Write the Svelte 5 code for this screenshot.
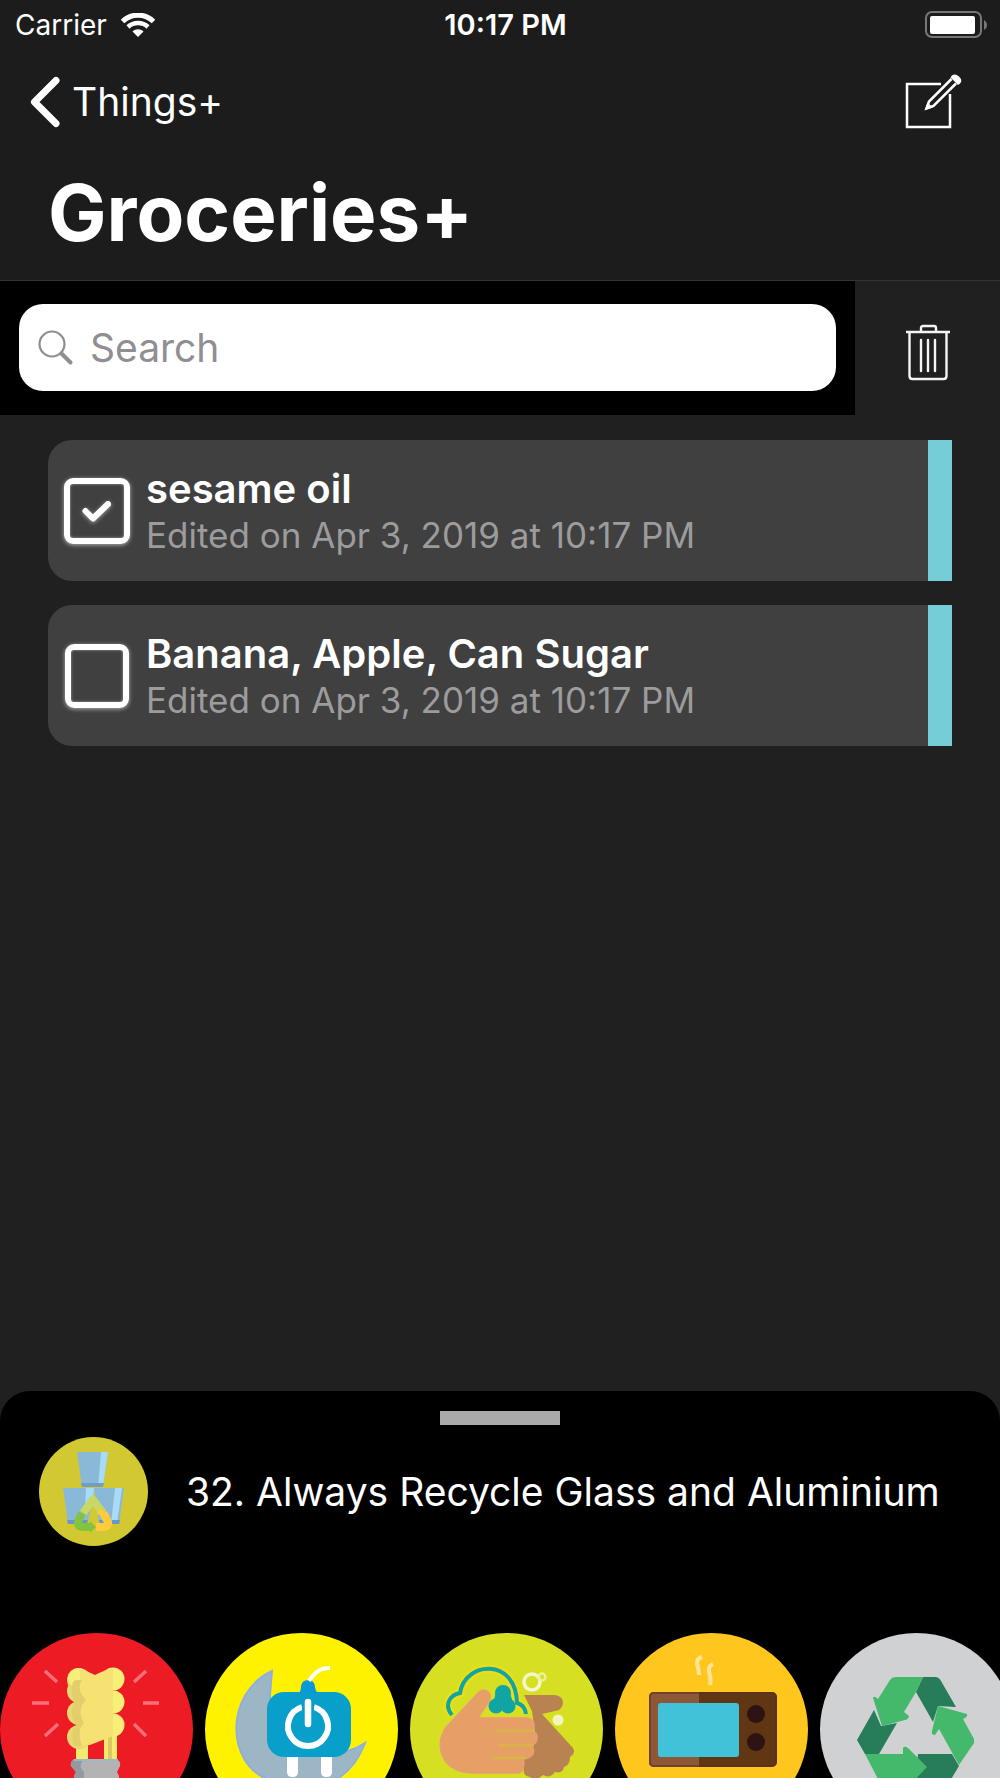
<script>
    let search = $state('');
    let items = $state([
        { title: 'sesame oil', edited: 'Edited on Apr 3, 2019 at 10:17 PM', done: true },
        { title: 'Banana, Apple, Can Sugar', edited: 'Edited on Apr 3, 2019 at 10:17 PM', done: false }
    ]);

    let shown = $derived(
        items.filter((item) => item.title.toLowerCase().includes(search.toLowerCase()))
    );

    const removeDone = () => {
        items = items.filter((item) => !item.done);
    };
</script>

<div class="app">
    <header>
        <div class="status">
            <div class="carrier">
                <span>Carrier</span>
                <svg width="34" height="24" viewBox="0 0 34 24" fill="none" stroke="#fff">
                    <path d="M1.5 8.5C10 0 24 0 32.500 8.500" stroke-width="5" />
                    <path d="M7 14C12.500 8.800 21.500 8.800 27 14" stroke-width="4.500" />
                    <path d="M11.500 18.500C14.500 15.500 19.500 15.500 22.500 18.500L17 24Z" fill="#fff" stroke="none" />
                </svg>
            </div>
            <span class="time">10:17 PM</span>
            <svg class="battery" width="64" height="28" viewBox="0 0 64 28">
                <rect x="2" y="1" width="55" height="25" rx="6" fill="none" stroke="#777" stroke-width="2" />
                <rect x="6" y="5" width="45" height="18" rx="2" fill="#fff" />
                <path d="M60 9C64 11 64 17 60 19Z" fill="#777" />
            </svg>
        </div>

        <nav>
            <a class="back" href="#things">
                <svg width="30" height="52" viewBox="0 0 30 52" fill="none" stroke="#fff" stroke-width="7" stroke-linecap="round" stroke-linejoin="round">
                    <path d="M26 4.500L4.500 26L26 47.500" />
                </svg>
                Things+
            </a>
            <button class="icon" aria-label="New item">
                <svg width="57" height="56" viewBox="0 0 57 56" fill="none" stroke="#fff">
                    <path d="M36 10H2V53H45V20" stroke-width="2.500" />
                    <path d="M46.500 5L24 27.500L21.500 34.500L28.500 32L51 9.500" stroke-width="2.500" />
                    <path d="M20 36L22.500 28.500L28 33.500Z" fill="#fff" stroke="none" />
                    <path d="M47 1.500Q50 -1 54 2.500Q58 6.500 55 9.500L53 11L45.500 3.500Z" fill="#fff" stroke="none" />
                </svg>
            </button>
        </nav>

        <h1>Groceries+</h1>
    </header>

    <div class="toolbar">
        <div class="search-wrap">
            <label class="search">
                <svg width="36" height="36" viewBox="0 0 36 36" fill="none" stroke="#8e8e93">
                    <circle cx="14" cy="14" r="12.500" stroke-width="2.200" />
                    <path d="M23.500 23.500L32.500 32.500" stroke-width="4" stroke-linecap="round" />
                </svg>
                <input type="search" placeholder="Search" aria-label="Search" bind:value={search} />
            </label>
        </div>
        <button class="icon trash" aria-label="Delete checked items" onclick={removeDone}>
            <svg width="44" height="58" viewBox="0 0 44 58" fill="none" stroke="#f4f4f4" stroke-width="2.400">
                <path d="M0 8H44" />
                <path d="M15 8V4Q15 2 17 2H28Q30 2 30 4V8" />
                <path d="M3.500 8V52Q3.500 55 6.500 55H37.500Q40.500 55 40.500 52V8" />
                <path d="M15 16V47M22 16V47M29 16V47" stroke-linecap="round" />
            </svg>
        </button>
    </div>

    <ul class="items">
        {#each shown as item}
            <li>
                <label class="item">
                    <span class="check">
                        <input type="checkbox" bind:checked={item.done} />
                        {#if item.done}
                            <svg width="32" height="24" viewBox="0 0 32 24" fill="none" stroke="#fff" stroke-width="6" stroke-linecap="round" stroke-linejoin="round">
                                <path d="M4.500 12L12 19.500L27 5" />
                            </svg>
                        {/if}
                    </span>
                    <span class="text">
                        <span class="title">{item.title}</span>
                        <span class="edited">{item.edited}</span>
                    </span>
                </label>
            </li>
        {/each}
    </ul>

    <section class="sheet">
        <div class="handle"></div>

        <div class="tip">
            <svg width="109" height="109" viewBox="0 0 109 109">
                <circle cx="54.500" cy="54.500" r="54.500" fill="#d2c832" />
                <!-- stacked glasses -->
                <path d="M38 15H69L64 50H43Z" fill="#8ab8d8" />
                <path d="M62 15H69L64 50H59Z" fill="#a9daf6" />
                <path d="M42 46H65L64 50H43Z" fill="#6f9fc8" />
                <path d="M24 51H55L51 87H29Z" fill="#8ab8d8" />
                <path d="M47 51H55L53 70H46Z" fill="#a9daf6" />
                <path d="M55 51H85L80 87H60Z" fill="#8ab8d8" />
                <path d="M76 51H83L78 87H72Z" fill="#a9daf6" />
                <path d="M28 83H52V87H29ZM58 83H81L80 87H58Z" fill="#6796cd" />
                <!-- recycling loop -->
                <path d="M54 65L47 90H62Z" fill="#d2c832" />
                <g fill="none" stroke-width="8" stroke-linejoin="round">
                    <path d="M44 76L54 63L64 76" stroke="#c8d862" />
                    <path d="M43 76L39 85Q38 90 44 90H52" stroke="#84c341" />
                    <path d="M64 76L69 85Q70 90 64 90H57" stroke="#ffcb3d" />
                </g>
                <path d="M51 84L57 90L51 96Z" fill="#84c341" />
                <path d="M58 77L60 72L69 76L71 82Z" fill="#ffcb3d" />
            </svg>
            <span>32. Always Recycle Glass and Aluminium</span>
        </div>

        <div class="tips">
            <button aria-label="Energy saving bulb">
                <svg width="193" height="193" viewBox="0 0 193 193">
                    <circle cx="96.500" cy="96.500" r="96.500" fill="#ed1c24" />
                    <path d="M45 38L57 49M32 70H49M45 103L58 91M146 38L134 49M143 70H159M146 103L134 91" stroke="#fa6f79" stroke-width="3.500" />
                    <path d="M76 100H88V128H76ZM104 95H117V128H104Z" fill="#f5ea70" />
                    <path d="M108 95H112V128H108Z" fill="#dfc85f" />
                    <g fill="#e7d873">
                        <circle cx="79" cy="47" r="12" />
                        <circle cx="79" cy="58" r="12" />
                        <circle cx="79" cy="80" r="12" />
                        <circle cx="79" cy="104" r="12" />
                    </g>
                    <g fill="#f7ef77">
                        <circle cx="78" cy="45" r="10" />
                        <circle cx="113" cy="46" r="11.500" />
                        <circle cx="113" cy="69" r="11.500" />
                        <circle cx="113" cy="92" r="11.500" />
                    </g>
                    <path d="M76 36Q84 36 95 42Q106 36 113 36V103L90 112L80 114V38Z" fill="#f6e173" />
                    <path d="M73 49Q75 46 82 47Q76 57 86 67Q76 77 84 90Q76 97 82 113H75Q69 102 76 92Q68 80 75 69Q69 58 73 49Z" fill="#e2ce6b" />
                    <path d="M74 126H117Q121 129 120 133L117 139L119 143V170H74V143L76 139L71 133Q70 129 74 126Z" fill="#b3b3b3" />
                    <path d="M74 126H84Q77 133 84 139V170H74V143L76 139L71 133Q70 129 74 126Z" fill="#929aa0" />
                    <path d="M74 127H118" stroke="#98bcc7" stroke-width="2" />
                </svg>
            </button>
            <button aria-label="Unplug at night">
                <svg width="193" height="193" viewBox="0 0 193 193">
                    <circle cx="96.500" cy="96.500" r="96.500" fill="#fff200" />
                    <path d="M67 38C20 60 20 130 64 147C105 168 145 150 160 110C145 120 125 123 100 118L65 100V62Z" fill="#9cb6c5" stroke="#8daee0" stroke-width="2" />
                    <path d="M82 120H93V139Q93 144 87.500 144Q82 144 82 139ZM116 120H127V139Q127 144 121.500 144Q116 144 116 139Z" fill="#fff" />
                    <rect x="62" y="59" width="84" height="65" rx="17" fill="#08a0ca" />
                    <path d="M94 60Q96 58 96 53Q97 47 103 47Q109 47 110 53Q110 58 113 60Z" fill="#0799d8" />
                    <path d="M104 48C110 39 115 35 125 35" fill="none" stroke="#fff" stroke-width="4" />
                    <path d="M97 74A20 20 0 1 0 109 74" fill="none" stroke="#fff" stroke-width="6" />
                    <path d="M103 69V91" stroke="#08a0ca" stroke-width="12" />
                    <path d="M103 69V91" stroke="#fff" stroke-width="6.500" stroke-linecap="round" />
                </svg>
            </button>
            <button aria-label="Wash hands">
                <svg width="193" height="193" viewBox="0 0 193 193">
                    <circle cx="96.500" cy="96.500" r="96.500" fill="#d7df23" />
                    <path d="M42 82C34 73 39 62 50 60C55 28 106 24 107 70Q115 72 116 81" fill="none" stroke="#eadf17" stroke-width="9" />
                    <path d="M42 82C34 73 39 62 50 60C55 28 106 24 107 70Q115 72 116 81" fill="none" stroke="#10a5a2" stroke-width="4" />
                    <g fill="#10a5a2">
                        <circle cx="93" cy="60" r="8" />
                        <circle cx="86" cy="73" r="7.500" />
                        <circle cx="98" cy="73" r="7.500" />
                        <path d="M86 60H100L104 73H82Z" />
                    </g>
                    <path d="M114 62H145Q153 63 153 70Q152 77 145 78L132 81L163 115Q166 120 160 124Q160 132 154 134Q153 141 145 139Q140 146 133 142Q125 149 120 144Q112 143 114 134V126L126 107L122 78Z" fill="#b98251" />
                    <path d="M68 60Q74 54 79 60Q82 64 78 70L68 85H117Q124 86 124 92Q124 96 121 98Q128 100 127 105Q127 111 121 112Q125 115 123 121Q121 125 113 126Q115 130 113 135Q112 140 107 140H62C30 140 22 108 39 91Z" fill="#e6a065" stroke="#ea9b79" stroke-width="1.500" />
                    <path d="M85 98H124M88 112H124M83 125H117" stroke="#d9b548" stroke-width="2.500" />
                    <circle cx="122" cy="49" r="8" fill="none" stroke="#f5f6ce" stroke-width="3.500" />
                    <circle cx="132" cy="44" r="3.500" fill="none" stroke="#edf197" stroke-width="2.500" />
                    <circle cx="148" cy="87" r="5.500" fill="#f3f5bd" />
                </svg>
            </button>
            <button aria-label="Use the microwave">
                <svg width="193" height="193" viewBox="0 0 193 193">
                    <circle cx="96.500" cy="96.500" r="96.500" fill="#ffc61e" />
                    <path d="M87 24C78 27 84 33 84 42M98 31C89 36 98 42 95 52" fill="none" stroke="#ffe595" stroke-width="4" />
                    <rect x="34" y="59" width="128" height="75" rx="5" fill="#603613" />
                    <path d="M84 59H39Q34 59 34 64V129Q34 134 39 134H84Z" fill="#8c5837" />
                    <rect x="35" y="60" width="126" height="73" rx="4" fill="none" stroke="#55292a" stroke-opacity="0.500" stroke-width="2" />
                    <rect x="43" y="70" width="81" height="54" rx="3" fill="#42c2d9" />
                    <circle cx="141" cy="81" r="9" fill="#2d1313" />
                    <circle cx="141" cy="109" r="9" fill="#2d1313" />
                </svg>
            </button>
            <button aria-label="Recycle">
                <svg width="193" height="193" viewBox="0 0 193 193">
                    <circle cx="96.500" cy="96.500" r="96.500" fill="#d0d1d3" />
                    <g fill="#277d59">
                        <path d="M103 44H115Q119 44 121 48L136 74L118 73L113 89L96 59Z" />
                        <path d="M54 77L61 93L77 90L59 121H45L37 107Z" />
                        <path d="M98 121H132L139 133L130 148Q127 152 123 152H95Z" />
                    </g>
                    <g fill="#45b96b">
                        <path d="M76 44H103L96 59L84 79L89 83Q88 87 85 87L62 93L53 65Q54 62 58 66L70 47Q72 44 76 44Z" />
                        <path d="M118 73L147 81Q148 84 143 86L154 106V110L139 132L119 96L115 102Q111 102 112 98Z" />
                        <path d="M45 121H83V115Q85 112 89 116L107 134L89 153L83 152H64Q61 152 59 148Z" />
                    </g>
                </svg>
            </button>
        </div>
    </section>
</div>

<style>
    :global(body) {
        margin: 0;
        background: #202020;
    }
    .app {
        display: flex;
        flex-direction: column;
        height: 100vh;
        overflow: hidden;
        background: #202020;
        color: #fff;
        font-family: Inter, "Liberation Sans", sans-serif;
        font-size: 39px;
        line-height: 46px;
    }
    svg {
        display: block;
        flex: none;
    }
    button {
        padding: 0;
        border: 0;
        background: none;
    }
    header {
        background: #1c1c1c;
        border-bottom: 1px solid #343434;
        padding-bottom: 10px;
    }
    .status {
        display: grid;
        grid-template-columns: 1fr auto 1fr;
        align-items: center;
        height: 50px;
        padding: 0 12px 0 15px;
        font-size: 28px;
    }
    .carrier {
        display: flex;
        align-items: center;
        gap: 14px;
    }
    .time {
        padding-left: 8px;
        font-size: 29px;
        font-weight: 600;
    }
    .battery {
        justify-self: end;
    }
    nav {
        display: flex;
        align-items: center;
        justify-content: space-between;
        height: 104px;
        padding: 0 38px 0 30px;
    }
    .back {
        display: flex;
        align-items: center;
        gap: 12px;
        color: inherit;
        text-decoration: none;
    }
    h1 {
        margin: 0;
        padding-left: 48px;
        font-size: 78px;
        font-weight: 700;
        line-height: 118px;
        margin-bottom: -2px;
    }
    .toolbar {
        display: flex;
    }
    .search-wrap {
        flex: 1;
        padding: 23px 19px 24px;
        background: #000;
    }
    .search {
        display: flex;
        align-items: center;
        gap: 16px;
        height: 87px;
        padding: 0 19px;
        border-radius: 24px;
        background: #fff;
    }
    .search input {
        flex: 1;
        min-width: 0;
        padding: 0;
        border: 0;
        outline: 0;
        background: none;
        color: #000;
        font: inherit;
    }
    .search input::placeholder {
        color: #8e8e93;
        opacity: 1;
    }
    .trash {
        display: grid;
        place-items: center;
        width: 145px;
        padding-top: 10px;
    }
    .items {
        display: flex;
        flex: 1;
        flex-direction: column;
        gap: 24px;
        min-height: 0;
        margin: 0;
        padding: 25px 48px;
        list-style: none;
    }
    .item {
        display: flex;
        align-items: center;
        gap: 16px;
        padding: 23px 16px;
        border-right: 24px solid #74cdd7;
        border-radius: 24px 0 0 24px;
        background: #404040;
    }
    .check {
        display: grid;
        place-items: center;
        width: 66px;
        height: 66px;
    }
    .check input,
    .check svg {
        grid-area: 1 / 1;
    }
    .check input {
        appearance: none;
        box-sizing: border-box;
        width: 64px;
        height: 64px;
        margin: 0;
        border: 6px solid #fff;
        border-radius: 9px;
        box-shadow: 0 1px 4px rgba(255, 255, 255, .6), inset 0 0 3px rgba(255, 255, 255, .5);
    }
    .check input:checked {
        width: 66px;
        height: 66px;
    }
    .check svg {
        pointer-events: none;
        filter: drop-shadow(0 1px 2px rgba(255, 255, 255, .5));
    }
    .text {
        display: flex;
        flex-direction: column;
        padding-top: 3px;
    }
    .title {
        font-size: 40px;
        font-weight: 600;
    }
    .edited {
        color: #9c9c9c;
        font-size: 35px;
    }
    .sheet {
        padding-top: 20px;
        border-radius: 30px 30px 0 0;
        background: #000;
    }
    .handle {
        width: 120px;
        height: 14px;
        margin: 0 auto 12px;
        background: #aaa;
    }
    .tip {
        display: flex;
        align-items: center;
        gap: 38px;
        padding: 0 39px 87px;
        white-space: nowrap;
    }
    .tips {
        display: flex;
        gap: 12px;
        height: 145px;
        overflow: hidden;
    }
</style>
